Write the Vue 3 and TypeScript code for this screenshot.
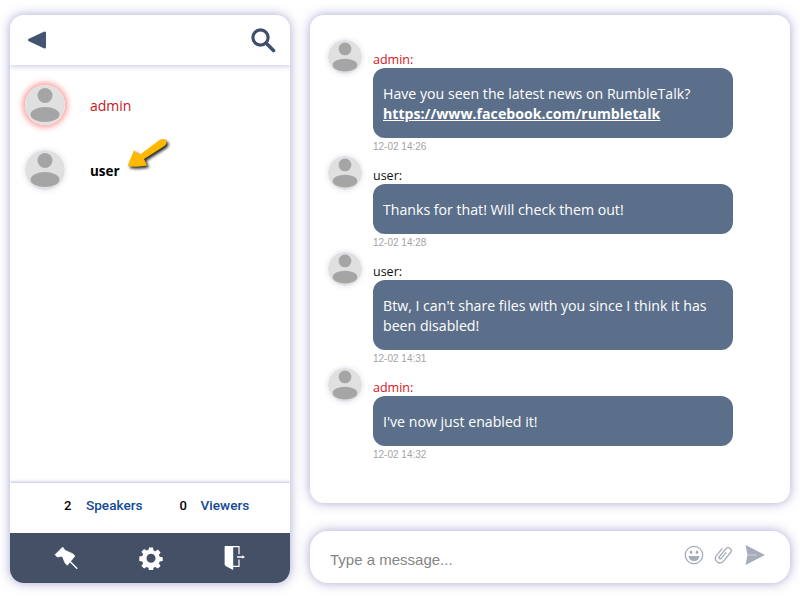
<script setup lang="ts">
interface Msg { id: number; name: string; admin: boolean; lines: string[]; link?: string; time: string }
const messages: Msg[] = [
  { id: 1, name: 'admin:', admin: true, lines: ['Have you seen the latest news on RumbleTalk?'], link: 'https://www.facebook.com/rumbletalk', time: '12-02 14:26' },
  { id: 2, name: 'user:', admin: false, lines: ['Thanks for that! Will check them out!'], time: '12-02 14:28' },
  { id: 3, name: 'user:', admin: false, lines: ["Btw, I can't share files with you since I think it has", 'been disabled!'], time: '12-02 14:31' },
  { id: 4, name: 'admin:', admin: true, lines: ["I've now just enabled it!"], time: '12-02 14:32' },
]
</script>

<template>
  <div class="page">
    <aside class="side panel">
      <header class="side-head">
        <svg class="back" width="20" height="20" viewBox="0 0 20 20"><path d="M2.500 10 L17.500 3 V17 Z" fill="#435470" stroke="#435470" stroke-width="3" stroke-linejoin="round" /></svg>
        <svg width="26" height="26" viewBox="0 0 26 26"><circle cx="10.5" cy="10.5" r="7.6" fill="none" stroke="#3e4f6b" stroke-width="3.200" /><path d="M16 16 L23.500 23.500" stroke="#3e4f6b" stroke-width="3.600" stroke-linecap="round" /></svg>
      </header>
      <div class="users">
        <div class="user">
          <svg class="avatar glow" width="40" height="40" viewBox="0 0 40 40"><circle cx="20" cy="20" r="20" fill="#e0e0e0" /><circle cx="20" cy="10.5" r="7.5" fill="#a5a5a5" /><ellipse cx="20" cy="29.5" rx="14.5" ry="7.5" fill="#a5a5a5" /></svg>
          <span class="uname admin">admin</span>
        </div>
        <div class="user">
          <svg class="avatar soft" width="40" height="40" viewBox="0 0 40 40"><circle cx="20" cy="20" r="20" fill="#e0e0e0" /><circle cx="20" cy="10.5" r="7.5" fill="#a5a5a5" /><ellipse cx="20" cy="29.5" rx="14.5" ry="7.5" fill="#a5a5a5" /></svg>
          <span class="uname me">user</span>
          <svg class="arrow" width="44" height="34" viewBox="0 0 44 34"><path d="M0.500 28 L7 12.300 L12.500 17 L32.500 2 Q36.500 0 39 2.500 Q40.500 5.500 37.500 8 L17 21 L20 27.500 Q10 29.500 0.500 28 Z" fill="#fdb900" /></svg>
        </div>
      </div>
      <div class="stats">
        <b class="num">2</b><span class="label">Speakers</span>
        <b class="num second">0</b><span class="label">Viewers</span>
      </div>
      <footer class="tools">
        <svg width="26" height="26" viewBox="0 0 26 26"><path d="M1 9.700 L8.700 2 L11 5.300 L18.700 8.700 L21 11 L13.300 20.300 L11 18 L8.300 11.300 L3.300 12 Z" fill="#fff" stroke="#fff" stroke-width="0.600" stroke-linejoin="round" /><path d="M15 15.500 L23.300 23.800" stroke="#fff" stroke-width="1.300" /></svg>
        <svg width="24" height="24" viewBox="0 0 24 24"><path fill="#fff" fill-rule="evenodd" d="M10 1.500h4l.5 3 1.900.8 2.500-1.700 2.700 2.800-1.700 2.400.8 1.900 3 .5v3.800l-3 .6-.8 1.800 1.700 2.500-2.700 2.700-2.500-1.700-1.900.8-.5 3h-4l-.5-3-1.900-.8-2.500 1.700-2.700-2.700 1.700-2.500-.8-1.800-3-.6V10.500l3-.5.8-1.900-1.700-2.400 2.700-2.800 2.500 1.700 1.900-.8zM12 7.700a4.500 4.500 0 1 0 0 9 4.500 4.500 0 0 0 0-9z" /></svg>
        <svg width="26" height="26" viewBox="0 0 26 26"><path d="M3.600 1.800 Q3.600 1 4.400 1 H12.200 V25 L5 21.200 Q3.600 20.500 3.600 19 Z" fill="#fff" /><path d="M12 1.600 H18 V9.300 M18 14.500 V21.400 H12" fill="none" stroke="#fff" stroke-width="1.200" /><path d="M16 12 H22" stroke="#fff" stroke-width="1.300" /><path d="M21.300 10.200 L24 12 L21.300 13.800 Z" fill="#fff" /></svg>
      </footer>
    </aside>
    <main class="main">
      <section class="chat panel">
        <article v-for="m in messages" :key="m.id" class="msg">
          <svg class="avatar soft" width="34" height="34" viewBox="0 0 40 40"><circle cx="20" cy="20" r="20" fill="#e0e0e0" /><circle cx="20" cy="10.5" r="7.5" fill="#a5a5a5" /><ellipse cx="20" cy="29.5" rx="14.5" ry="7.5" fill="#a5a5a5" /></svg>
          <div class="msg-body">
            <div class="who" :class="{ admin: m.admin }">{{ m.name }}</div>
            <div class="bubble">
              <div v-for="l in m.lines" :key="l">{{ l }}</div>
              <a v-if="m.link" class="link">{{ m.link }}</a>
            </div>
            <div class="time">{{ m.time }}</div>
          </div>
        </article>
      </section>
      <div class="composer panel">
        <span class="placeholder">Type a message...</span>
        <div class="actions">
          <svg width="20" height="20" viewBox="0 0 20 20"><circle cx="10" cy="10" r="8.700" fill="none" stroke="#a6acb9" stroke-width="1.300" /><ellipse cx="7" cy="7.300" rx="1.300" ry="1.800" fill="#a6acb9" /><ellipse cx="13" cy="7.300" rx="1.300" ry="1.800" fill="#a6acb9" /><path d="M4.500 11 H15.500 Q15 16 10 16 Q5 16 4.500 11 Z" fill="#a6acb9" /></svg>
          <svg width="20" height="20" viewBox="0 0 20 20"><path transform="rotate(40 10 10)" d="M10 6.500 V14 Q10 15.500 8.700 15.500 Q7.500 15.500 7.500 14 V4.500 Q7.500 1 10.500 1 Q13.500 1 13.500 4.500 V15 Q13.500 19.500 9 19.500 Q4.500 19.500 4.500 15 V6" fill="none" stroke="#a6acb9" stroke-width="1.300" /></svg>
          <svg width="22" height="22" viewBox="0 0 22 22"><path d="M1.500 1 L21 11 L1.500 21 L3.500 11 Z" fill="#a6acb9" /><path d="M3.500 11 H13" stroke="#d5d8df" stroke-width="0.900" /></svg>
        </div>
      </div>
    </main>
  </div>
</template>

<style scoped>
.page {
  width: 800px;
  height: 598px;
  box-sizing: border-box;
  padding: 15px 10px;
  display: flex;
  gap: 20px;
  background: #fff;
  font-family: "Open Sans", "Noto Sans", sans-serif;
  overflow: hidden;
}
.panel {
  background: #fff;
  border-radius: 14px;
  box-shadow: 0 0 11px rgba(80, 80, 165, 0.5);
}
.side {
  width: 280px;
  height: 568px;
  display: flex;
  flex-direction: column;
  overflow: hidden;
}
.side-head {
  height: 50px;
  flex: none;
  box-sizing: border-box;
  padding: 0 14px 0 17px;
  display: flex;
  align-items: center;
  justify-content: space-between;
  box-shadow: 0 1px 6px rgba(90, 90, 170, 0.35);
  position: relative;
}
.users {
  flex: 1;
  padding-top: 20px;
  padding-left: 15px;
}
.user {
  height: 40px;
  margin-bottom: 25px;
  display: flex;
  align-items: center;
  position: relative;
}
.avatar { border-radius: 50%; flex: none; }
.glow { box-shadow: 0 0 6px 2px rgba(250, 70, 70, 0.6); }
.soft { box-shadow: 0 0 5px rgba(120, 120, 180, 0.25); }
.uname { margin-left: 25px; font-size: 14px; }
.admin { color: #c5161d; }
.me { font-weight: 700; color: #000; font-size: 13.500px; padding-top: 2px; }
.arrow {
  position: absolute;
  left: 102px;
  top: -12px;
  filter: drop-shadow(2px 2px 1.500px rgba(0, 0, 0, 0.85));
}
.stats {
  height: 50px;
  flex: none;
  box-sizing: border-box;
  padding: 0 0 6px 54px;
  display: flex;
  align-items: center;
  box-shadow: 0 -1px 3px rgba(90, 90, 170, 0.4);
  font-family: Roboto, "Liberation Sans", sans-serif;
  font-size: 13.600px;
  font-weight: 500;
}
.num { font-weight: 500; color: #000; width: 22px; font-size: 13px; }
.num.second { margin-left: 37px; width: 21px; }
.label { color: #124a94; }
.tools {
  height: 50px;
  flex: none;
  background: #435066;
  display: flex;
  align-items: center;
  justify-content: space-between;
  padding: 0 43px 0 44px;
  box-sizing: border-box;
}
.main {
  width: 480px;
  display: flex;
  flex-direction: column;
  gap: 28px;
}
.chat {
  height: 488px;
  box-sizing: border-box;
  padding: 25px 18px;
}
.msg { display: flex; gap: 11px; }
.msg-body { padding-top: 12px; }
.who {
  font-size: 12.500px;
  line-height: 16px;
  color: #111;
}
.who.admin { color: #d8121a; }
.bubble {
  width: 360px;
  box-sizing: border-box;
  padding: 16px 10px 14px;
  background: #5b6f8a;
  border-radius: 12px;
  color: #fff;
  font-size: 14.150px;
  line-height: 20px;
}
.link { font-weight: 700; text-decoration: underline; display: block; }
.time {
  height: 18px;
  padding-top: 3px;
  box-sizing: border-box;
  font-family: "Liberation Sans", Arial, sans-serif;
  font-size: 10px;
  line-height: 12px;
  color: #a3a3a3;
}
.composer {
  height: 52px;
  box-sizing: border-box;
  padding: 0 24px 0 20px;
  border-radius: 18px;
  display: flex;
  align-items: center;
  justify-content: space-between;
}
.placeholder {
  font-family: "Liberation Sans", Arial, sans-serif;
  font-size: 15px;
  color: #858585;
  padding-top: 5px;
}
.actions { display: flex; align-items: center; gap: 10px; margin-top: -4px; }
</style>
